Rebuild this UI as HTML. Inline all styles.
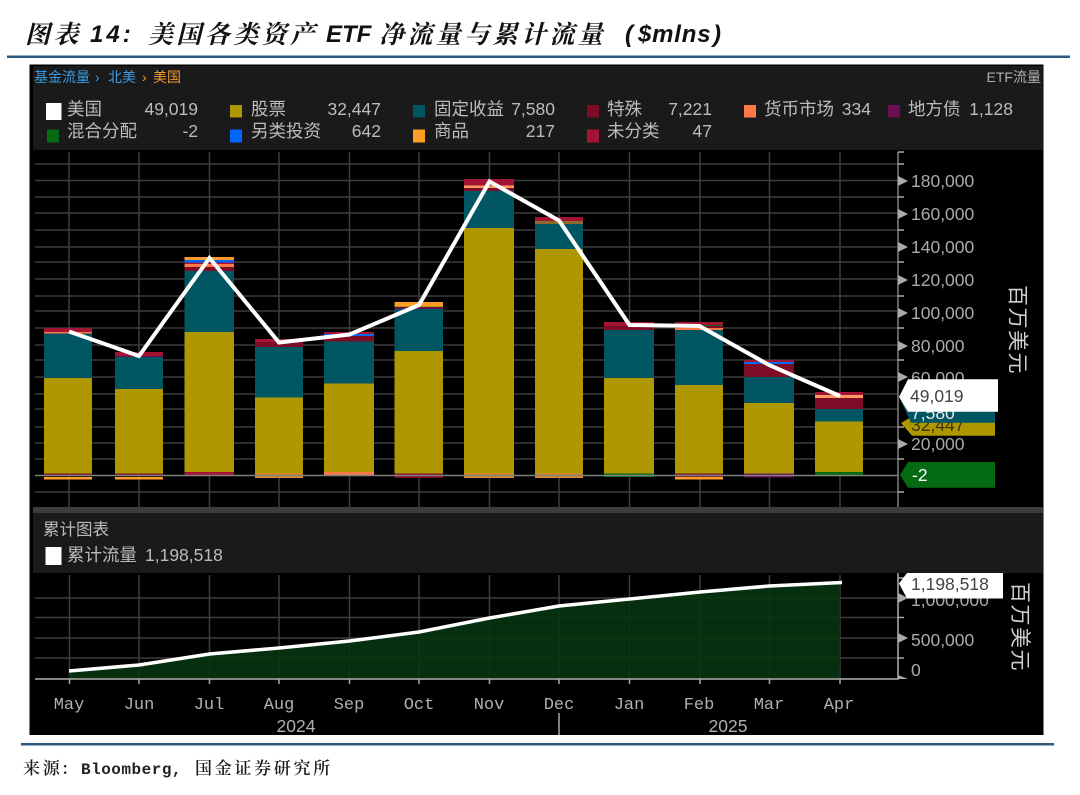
<!DOCTYPE html>
<html lang="zh"><head><meta charset="utf-8"><title>美国各类资产 ETF 净流量</title>
<style>html,body{margin:0;padding:0;background:#fff}svg{display:block;filter:blur(.35px)}
.s{font-family:"Liberation Sans","Noto Sans CJK SC",sans-serif}
.t{font-family:"Noto Serif CJK SC","Liberation Serif",serif;font-style:italic;font-weight:700;font-size:25px;fill:#111;letter-spacing:3.4px}
.tl{font-family:"Liberation Sans","Noto Sans CJK SC",sans-serif;font-style:italic;font-weight:700;font-size:24px;fill:#111}
.f{font-family:"Noto Serif CJK SC","Liberation Serif",serif;font-weight:600;font-size:17px;fill:#1a1a1a;letter-spacing:2.7px}
.l{font-size:17.5px;fill:#bcbcbc}.a{font-size:17.5px;fill:#aaa}
.m{font-family:"Liberation Mono","Noto Sans CJK SC",monospace;font-size:17px;fill:#b0b0b0;text-anchor:middle}
.y{font-size:17.5px;fill:#b0b0b0;text-anchor:middle}.e{text-anchor:end}
.g line{stroke:#3c3c3c;stroke-width:1.5}
</style></head><body>
<svg width="1080" height="795" viewBox="0 0 1080 795" xmlns="http://www.w3.org/2000/svg" class="s">
<rect width="1080" height="795" fill="#fff"/>
<text class="t" x="25" y="43" letter-spacing="1.500">图表</text><text class="tl" x="90" y="42" letter-spacing="3">14:</text>
<text class="t" x="148" y="43">美国各类资产</text><text class="tl" x="326" y="42">ETF</text>
<text class="t" x="379" y="43">净流量与累计流量</text><text class="tl" x="625" y="42" font-weight="400">(</text>
<text class="tl" x="638" y="42" font-size="23" letter-spacing=".8">$mlns</text><text class="tl" x="713" y="42" font-weight="400">)</text>
<rect x="7" y="55.500" width="1063" height="2.500" fill="#2c5a80"/>
<rect x="29.500" y="64.500" width="1014" height="670.500" fill="#000"/>
<rect x="33" y="66" width="1010" height="84" fill="#1a1a1a"/>
<text x="34" y="82" font-size="14" fill="#3d9be0">基金流量</text><text x="95" y="82" font-size="14" fill="#3d9be0">›</text><text x="108" y="82" font-size="14" fill="#3d9be0">北美</text>
<text x="142" y="82" font-size="14" fill="#f39a2b">›</text><text x="153" y="82" font-size="14" fill="#f39a2b">美国</text>
<text x="1041" y="82" font-size="14" fill="#b0b0b0" class="e">ETF流量</text>
<rect x="46" y="103" width="15.500" height="17" fill="#fff"/>
<rect x="230" y="105" width="12" height="12.500" fill="#ae9700"/><rect x="413" y="105" width="12" height="12.500" fill="#005662"/>
<rect x="587" y="105" width="12" height="12.500" fill="#7e0c27"/><rect x="744" y="105" width="12" height="12.500" fill="#ff7847"/><rect x="888" y="105" width="12" height="12.500" fill="#6b0f52"/>
<rect x="47" y="129.500" width="12" height="13" fill="#046b12"/><rect x="230" y="129.500" width="12" height="13" fill="#0068ff"/>
<rect x="413" y="129.500" width="12" height="13" fill="#ff9c27"/><rect x="587" y="129.500" width="12" height="13" fill="#a31333"/>
<g class="l">
<text x="67" y="115">美国</text><text x="198" y="115" class="e">49,019</text>
<text x="251" y="115">股票</text><text x="381" y="115" class="e">32,447</text>
<text x="434" y="115">固定收益</text><text x="555" y="115" class="e">7,580</text>
<text x="607" y="115">特殊</text><text x="712" y="115" class="e">7,221</text>
<text x="764" y="115">货币市场</text><text x="871" y="115" class="e">334</text>
<text x="908" y="115">地方债</text><text x="1013" y="115" class="e">1,128</text>
<text x="67" y="137">混合分配</text><text x="198" y="137" class="e">-2</text>
<text x="251" y="137">另类投资</text><text x="381" y="137" class="e">642</text>
<text x="434" y="137">商品</text><text x="555" y="137" class="e">217</text>
<text x="607" y="137">未分类</text><text x="712" y="137" class="e">47</text>
</g>
<g class="g">
<line x1="35" x2="898" y1="164" y2="164"/><line x1="35" x2="898" y1="180.500" y2="180.500"/><line x1="35" x2="898" y1="197" y2="197"/><line x1="35" x2="898" y1="213" y2="213"/><line x1="35" x2="898" y1="230" y2="230"/><line x1="35" x2="898" y1="247" y2="247"/><line x1="35" x2="898" y1="262" y2="262"/><line x1="35" x2="898" y1="279" y2="279"/><line x1="35" x2="898" y1="296" y2="296"/><line x1="35" x2="898" y1="311" y2="311"/><line x1="35" x2="898" y1="328" y2="328"/><line x1="35" x2="898" y1="345" y2="345"/><line x1="35" x2="898" y1="360" y2="360"/><line x1="35" x2="898" y1="377" y2="377"/><line x1="35" x2="898" y1="394" y2="394"/><line x1="35" x2="898" y1="409" y2="409"/><line x1="35" x2="898" y1="427" y2="427"/><line x1="35" x2="898" y1="443" y2="443"/><line x1="35" x2="898" y1="459" y2="459"/><line x1="35" x2="898" y1="492" y2="492"/>
<line x1="69" x2="69" y1="152" y2="507"/><line x1="139" x2="139" y1="152" y2="507"/><line x1="209.500" x2="209.500" y1="152" y2="507"/><line x1="279" x2="279" y1="152" y2="507"/><line x1="349.500" x2="349.500" y1="152" y2="507"/><line x1="419" x2="419" y1="152" y2="507"/><line x1="489.500" x2="489.500" y1="152" y2="507"/><line x1="559" x2="559" y1="152" y2="507"/><line x1="629.500" x2="629.500" y1="152" y2="507"/><line x1="700" x2="700" y1="152" y2="507"/><line x1="769.500" x2="769.500" y1="152" y2="507"/><line x1="840" x2="840" y1="152" y2="507"/>
</g>
<g>
<rect x="44" y="477" width="48" height="2.500" fill="#ff9c27"/><rect x="44" y="473.500" width="48" height="2" fill="#7e0c27"/><rect x="44" y="378" width="48" height="95.500" fill="#ae9700"/><rect x="44" y="333.500" width="48" height="44.500" fill="#005662"/><rect x="44" y="332" width="48" height="1.500" fill="#ff7847"/><rect x="44" y="328" width="48" height="4" fill="#a31333"/>
<rect x="115" y="477" width="48" height="2.500" fill="#ff9c27"/><rect x="115" y="473.500" width="48" height="2" fill="#7e0c27"/><rect x="115" y="389" width="48" height="84.500" fill="#ae9700"/><rect x="115" y="357" width="48" height="32" fill="#005662"/><rect x="115" y="356" width="48" height="1" fill="#6b0f52"/><rect x="115" y="352" width="48" height="4" fill="#a31333"/>
<rect x="184.500" y="472" width="49.500" height="3.500" fill="#a31333"/><rect x="184.500" y="332" width="49.500" height="140" fill="#ae9700"/><rect x="184.500" y="271" width="49.500" height="61" fill="#005662"/><rect x="184.500" y="267" width="49.500" height="4" fill="#7e0c27"/><rect x="184.500" y="264" width="49.500" height="3" fill="#ff7847"/><rect x="184.500" y="262.500" width="49.500" height="1.500" fill="#a31333"/><rect x="184.500" y="260" width="49.500" height="2.500" fill="#0068ff"/><rect x="184.500" y="257" width="49.500" height="3" fill="#ff9c27"/>
<rect x="255" y="473.500" width="48" height="4.500" fill="#d9852c"/><rect x="255" y="397.500" width="48" height="76" fill="#ae9700"/><rect x="255" y="347" width="48" height="50.500" fill="#005662"/><rect x="255" y="342" width="48" height="5" fill="#7e0c27"/><rect x="255" y="339" width="48" height="3" fill="#a31333"/>
<rect x="324" y="472" width="50" height="3.500" fill="#ff7847"/><rect x="324" y="383.500" width="50" height="88.500" fill="#ae9700"/><rect x="324" y="341.500" width="50" height="42" fill="#005662"/><rect x="324" y="336" width="50" height="5.500" fill="#7e0c27"/><rect x="324" y="334" width="50" height="2" fill="#0068ff"/><rect x="324" y="332" width="50" height="2" fill="#a31333"/>
<rect x="394.500" y="473.500" width="48.500" height="4.500" fill="#7e0c27"/><rect x="394.500" y="351" width="48.500" height="122.500" fill="#ae9700"/><rect x="394.500" y="309" width="48.500" height="42" fill="#005662"/><rect x="394.500" y="307" width="48.500" height="2" fill="#6b0f52"/><rect x="394.500" y="306" width="48.500" height="1" fill="#ae9700"/><rect x="394.500" y="302" width="48.500" height="4" fill="#ff9c27"/>
<rect x="464" y="473.500" width="50" height="4.500" fill="#d9852c"/><rect x="464" y="228" width="50" height="245.500" fill="#ae9700"/><rect x="464" y="191" width="50" height="37" fill="#005662"/><rect x="464" y="188" width="50" height="3" fill="#7e0c27"/><rect x="464" y="185.500" width="50" height="2.500" fill="#ff9c60"/><rect x="464" y="179" width="50" height="6.500" fill="#a31333"/>
<rect x="535" y="473.500" width="48" height="4.500" fill="#d9852c"/><rect x="535" y="249" width="48" height="224.500" fill="#ae9700"/><rect x="535" y="224" width="48" height="25" fill="#005662"/><rect x="535" y="221" width="48" height="3" fill="#8f6a2c"/><rect x="535" y="217" width="48" height="4" fill="#a31333"/>
<rect x="604" y="473.500" width="50" height="3.500" fill="#046b12"/><rect x="604" y="378" width="50" height="95.500" fill="#ae9700"/><rect x="604" y="330" width="50" height="48" fill="#005662"/><rect x="604" y="326" width="50" height="4" fill="#7e0c27"/><rect x="604" y="322" width="50" height="4" fill="#a31333"/>
<rect x="675" y="477" width="48" height="2.500" fill="#ff9c27"/><rect x="675" y="473.500" width="48" height="3.500" fill="#7e0c27"/><rect x="675" y="385" width="48" height="88.500" fill="#ae9700"/><rect x="675" y="330" width="48" height="55" fill="#005662"/><rect x="675" y="328" width="48" height="2" fill="#ff7847"/><rect x="675" y="326" width="48" height="2" fill="#7e0c27"/><rect x="675" y="325" width="48" height="1" fill="#046b12"/><rect x="675" y="322" width="48" height="3" fill="#a31333"/>
<rect x="744" y="473.500" width="50" height="4" fill="#6b0f52"/><rect x="744" y="403" width="50" height="70.500" fill="#ae9700"/><rect x="744" y="377" width="50" height="26" fill="#005662"/><rect x="744" y="364" width="50" height="13" fill="#7e0c27"/><rect x="744" y="362" width="50" height="2" fill="#0068ff"/><rect x="744" y="360" width="50" height="2" fill="#a31333"/>
<rect x="815" y="472" width="48" height="3.500" fill="#046b12"/><rect x="815" y="421.500" width="48" height="50.500" fill="#ae9700"/><rect x="815" y="409" width="48" height="12.500" fill="#005662"/><rect x="815" y="398" width="48" height="11" fill="#7e0c27"/><rect x="815" y="395" width="48" height="3" fill="#ff9c60"/><rect x="815" y="392" width="48" height="3" fill="#a31333"/>
</g>
<line x1="35" x2="898" y1="475.500" y2="475.500" stroke="#808080" stroke-width="1.500"/>
<polyline points="69,331.500 139,356 209.500,258 279,342.500 349.500,334.500 419,305 489.500,181.500 559,220.500 629.500,325 699.500,326 769,365 840,396" fill="none" stroke="#fff" stroke-width="4" stroke-linejoin="miter"/>
<line x1="898" x2="898" y1="152" y2="507" stroke="#808080" stroke-width="1.500"/>
<path d="M898 176l10 5-10 5zM898 209l10 5-10 5zM898 242l10 5-10 5zM898 275l10 5-10 5zM898 308l10 5-10 5zM898 341l10 5-10 5zM898 372l10 5-10 5zM898 439l10 5-10 5z" fill="#aaa"/>
<path d="M898 164h6M898 197h6M898 230h6M898 262h6M898 296h6M898 328h6M898 360h6M898 427h6M898 459h6M898 492h6M898 152h6" stroke="#aaa" stroke-width="1.500"/>
<g class="a"><text x="911" y="187">180,000</text><text x="911" y="220">160,000</text><text x="911" y="253">140,000</text><text x="911" y="286">120,000</text><text x="911" y="319">100,000</text><text x="911" y="352">80,000</text><text x="911" y="384">60,000</text><text x="911" y="450">20,000</text></g>
<path d="M901 423l10-6h84v18.700h-83z" fill="#ae9700"/><text x="911" y="431" font-size="17.500" fill="#3d3400">32,447</text>
<path d="M901 401h94v21.700h-84z" fill="#005662"/><text x="911" y="419" font-size="17.500" fill="#e8e8e8">7,580</text>
<path d="M899 397l9-17.700h90v32.400h-90z" fill="#fff"/><text x="910" y="402" font-size="17.500" fill="#444">49,019</text>
<path d="M900 475l8-13h87v25.700h-87z" fill="#046b12"/><text x="912" y="481" font-size="17.500" fill="#fff">-2</text>
<text transform="translate(1017,285) rotate(90)" y="0" font-size="21" fill="#cfcfcf" letter-spacing="1.500" dominant-baseline="central">百万美元</text>
<rect x="33" y="507" width="1010" height="6" fill="#3c3c3c"/><rect x="33" y="513" width="1010" height="60" fill="#1a1a1a"/>
<text x="43" y="535" font-size="16.500" fill="#bcbcbc">累计图表</text>
<rect x="45.500" y="547" width="16" height="18" fill="#fff"/>
<text x="67" y="561" font-size="17.500" fill="#bcbcbc">累计流量</text><text x="145" y="561" font-size="17.500" fill="#bcbcbc">1,198,518</text>
<g class="g">
<line x1="35" x2="898" y1="598" y2="598"/><line x1="35" x2="898" y1="617.500" y2="617.500"/><line x1="35" x2="898" y1="638" y2="638"/><line x1="35" x2="898" y1="658" y2="658"/>
<line x1="69.500" x2="69.500" y1="575" y2="679"/><line x1="139" x2="139" y1="575" y2="679"/><line x1="209.500" x2="209.500" y1="575" y2="679"/><line x1="279" x2="279" y1="575" y2="679"/><line x1="349.500" x2="349.500" y1="575" y2="679"/><line x1="419" x2="419" y1="575" y2="679"/><line x1="489.500" x2="489.500" y1="575" y2="679"/><line x1="559" x2="559" y1="575" y2="679"/><line x1="629.500" x2="629.500" y1="575" y2="679"/><line x1="700" x2="700" y1="575" y2="679"/><line x1="769.500" x2="769.500" y1="575" y2="679"/><line x1="840" x2="840" y1="575" y2="679"/>
</g>
<path d="M69 671L139 665 209.500 654 279 648 349.500 641 419 632 489.500 618 559 606 629.500 599 700 592 769.500 586 840 582.500V679H69z" fill="#05340f" opacity=".9"/>
<polyline points="69,671 139,665 209.500,654 279,648 349.500,641 419,632 489.500,618 559,606 629.500,599 700,592 769.500,586 842,582.500" fill="none" stroke="#fff" stroke-width="3.500"/>
<path d="M35 679H898V573" fill="none" stroke="#b0b0b0" stroke-width="1.500"/>
<path d="M69.500 679v5M139 679v5M209.500 679v5M279 679v5M349.500 679v5M419 679v5M489.500 679v5M559 679v5M629.500 679v5M700 679v5M769.500 679v5M840 679v5M898 617.500h6M898 658h6M898 578h6" stroke="#aaa" stroke-width="1.500"/>
<path d="M898 593l10 5-10 5zM898 633l10 5-10 5zM898 675l10 4h-10z" fill="#aaa"/>
<text x="911" y="606" class="a">1,000,000</text><text x="911" y="646" class="a">500,000</text><text x="911" y="676" class="a">0</text>
<path d="M899 583.500l8-10.500h96v25.500h-96z" fill="#fff"/><text x="911" y="590" font-size="17.500" fill="#444">1,198,518</text>
<text transform="translate(1019.500,582) rotate(90)" y="0" font-size="21" fill="#cfcfcf" letter-spacing="1.500" dominant-baseline="central">百万美元</text>
<g class="m"><text x="69" y="709">May</text><text x="139" y="709">Jun</text><text x="209" y="709">Jul</text><text x="279" y="709">Aug</text><text x="349" y="709">Sep</text><text x="419" y="709">Oct</text><text x="489" y="709">Nov</text><text x="559" y="709">Dec</text><text x="629" y="709">Jan</text><text x="699" y="709">Feb</text><text x="769" y="709">Mar</text><text x="839" y="709">Apr</text></g>
<text x="296" y="732" class="y">2024</text><text x="728" y="732" class="y">2025</text>
<line x1="559" x2="559" y1="713" y2="735" stroke="#aaa" stroke-width="1.500"/>
<rect x="21" y="743" width="1033" height="2.500" fill="#2c5a80"/>
<text class="f" x="23" y="774">来源:</text><text x="81" y="774" font-family="'Liberation Mono',monospace" font-size="16" fill="#222" letter-spacing=".5" font-weight="700">Bloomberg,</text>
<text class="f" x="195" y="774">国金证券研究所</text>
</svg>
</body></html>
